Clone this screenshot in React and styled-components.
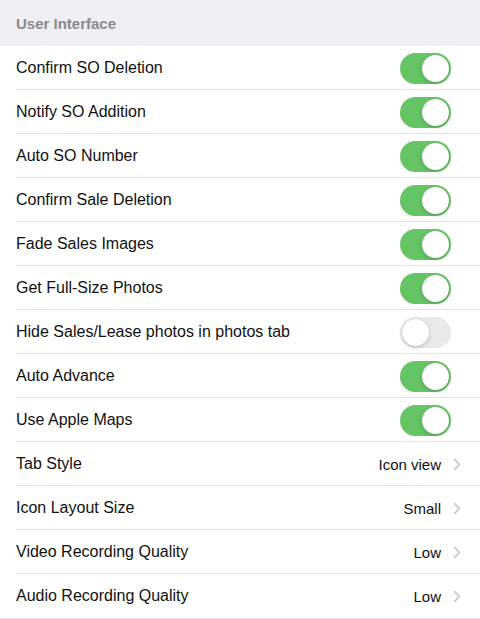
import React, { useState } from "react";
import styled, { createGlobalStyle } from "styled-components";

const GlobalStyle = createGlobalStyle`
  html, body {
    margin: 0;
    padding: 0;
    background: #ffffff;
    font-family: "Liberation Sans", Arial, sans-serif;
    -webkit-font-smoothing: antialiased;
  }
`;

const settings = [
  { label: "Confirm SO Deletion", type: "toggle", on: true },
  { label: "Notify SO Addition", type: "toggle", on: true },
  { label: "Auto SO Number", type: "toggle", on: true },
  { label: "Confirm Sale Deletion", type: "toggle", on: true },
  { label: "Fade Sales Images", type: "toggle", on: true },
  { label: "Get Full-Size Photos", type: "toggle", on: true },
  { label: "Hide Sales/Lease photos in photos tab", type: "toggle", on: false },
  { label: "Auto Advance", type: "toggle", on: true },
  { label: "Use Apple Maps", type: "toggle", on: true },
  { label: "Tab Style", type: "link", value: "Icon view" },
  { label: "Icon Layout Size", type: "link", value: "Small" },
  { label: "Video Recording Quality", type: "link", value: "Low" },
  { label: "Audio Recording Quality", type: "link", value: "Low" },
];

const Toggle = ({ initial }) => {
  const [on, setOn] = useState(initial);
  return (
    <Track $on={on} onClick={() => setOn(!on)}>
      <Knob $on={on} />
    </Track>
  );
};

const Chevron = () => (
  <svg width="8" height="13" viewBox="0 0 8 13" fill="none">
    <path d="M1.5 1.5L6.5 6.5L1.5 11.5" stroke="#c4c4c7" strokeWidth="1.6" strokeLinecap="round" strokeLinejoin="round" />
  </svg>
);

const App = () => {
  return (
    <>
      <GlobalStyle />
      <Page>
        <SectionHeader>User Interface</SectionHeader>
        <List>
          {settings.map((s, i) => (
            <Row key={s.label} $last={i === settings.length - 1}>
              <Label>{s.label}</Label>
              {s.type === "toggle" ? (
                <Toggle initial={s.on} />
              ) : (
                <Detail>
                  <Value>{s.value}</Value>
                  <Chevron />
                </Detail>
              )}
            </Row>
          ))}
        </List>
      </Page>
    </>
  );
};

const Page = styled.div`
  width: 480px;
  min-height: 619px;
  background: #ffffff;
`;

const SectionHeader = styled.div`
  height: 46px;
  box-sizing: border-box;
  padding: 0 16px;
  display: flex;
  align-items: center;
  background: #efeff4;
  color: #8a8a8e;
  font-size: 15px;
  font-weight: 600;
`;

const List = styled.div`
  display: flex;
  flex-direction: column;
  border-bottom: 1px solid #e3e3e6;
`;

const Row = styled.div`
  height: 44px;
  display: flex;
  align-items: center;
  justify-content: space-between;
  padding: 0 19px 0 16px;
  box-sizing: border-box;
  position: relative;

  &::after {
    content: "";
    display: ${(p) => (p.$last ? "none" : "block")};
    position: absolute;
    left: 16px;
    right: 0;
    bottom: 0;
    height: 1px;
    background: #e3e3e6;
  }
`;

const Label = styled.span`
  font-size: 16px;
  color: #111111;
`;

const Detail = styled.div`
  display: flex;
  align-items: center;
  gap: 12px;
`;

const Value = styled.span`
  font-size: 15px;
  color: #111111;
`;

const Track = styled.div`
  width: 51px;
  height: 31px;
  border-radius: 16px;
  box-sizing: border-box;
  margin-right: 10px;
  background: ${(p) => (p.$on ? "#65c466" : "#e9e9ea")};
  position: relative;
  cursor: pointer;
  transition: background 0.2s;
`;

const Knob = styled.div`
  position: absolute;
  top: 2px;
  left: ${(p) => (p.$on ? "22px" : "2px")};
  width: 27px;
  height: 27px;
  border-radius: 50%;
  background: #ffffff;
  box-shadow: 0 2px 4px rgba(0, 0, 0, 0.15), 0 0 1px rgba(0, 0, 0, 0.2);
  transition: left 0.2s;
`;

export default App;
